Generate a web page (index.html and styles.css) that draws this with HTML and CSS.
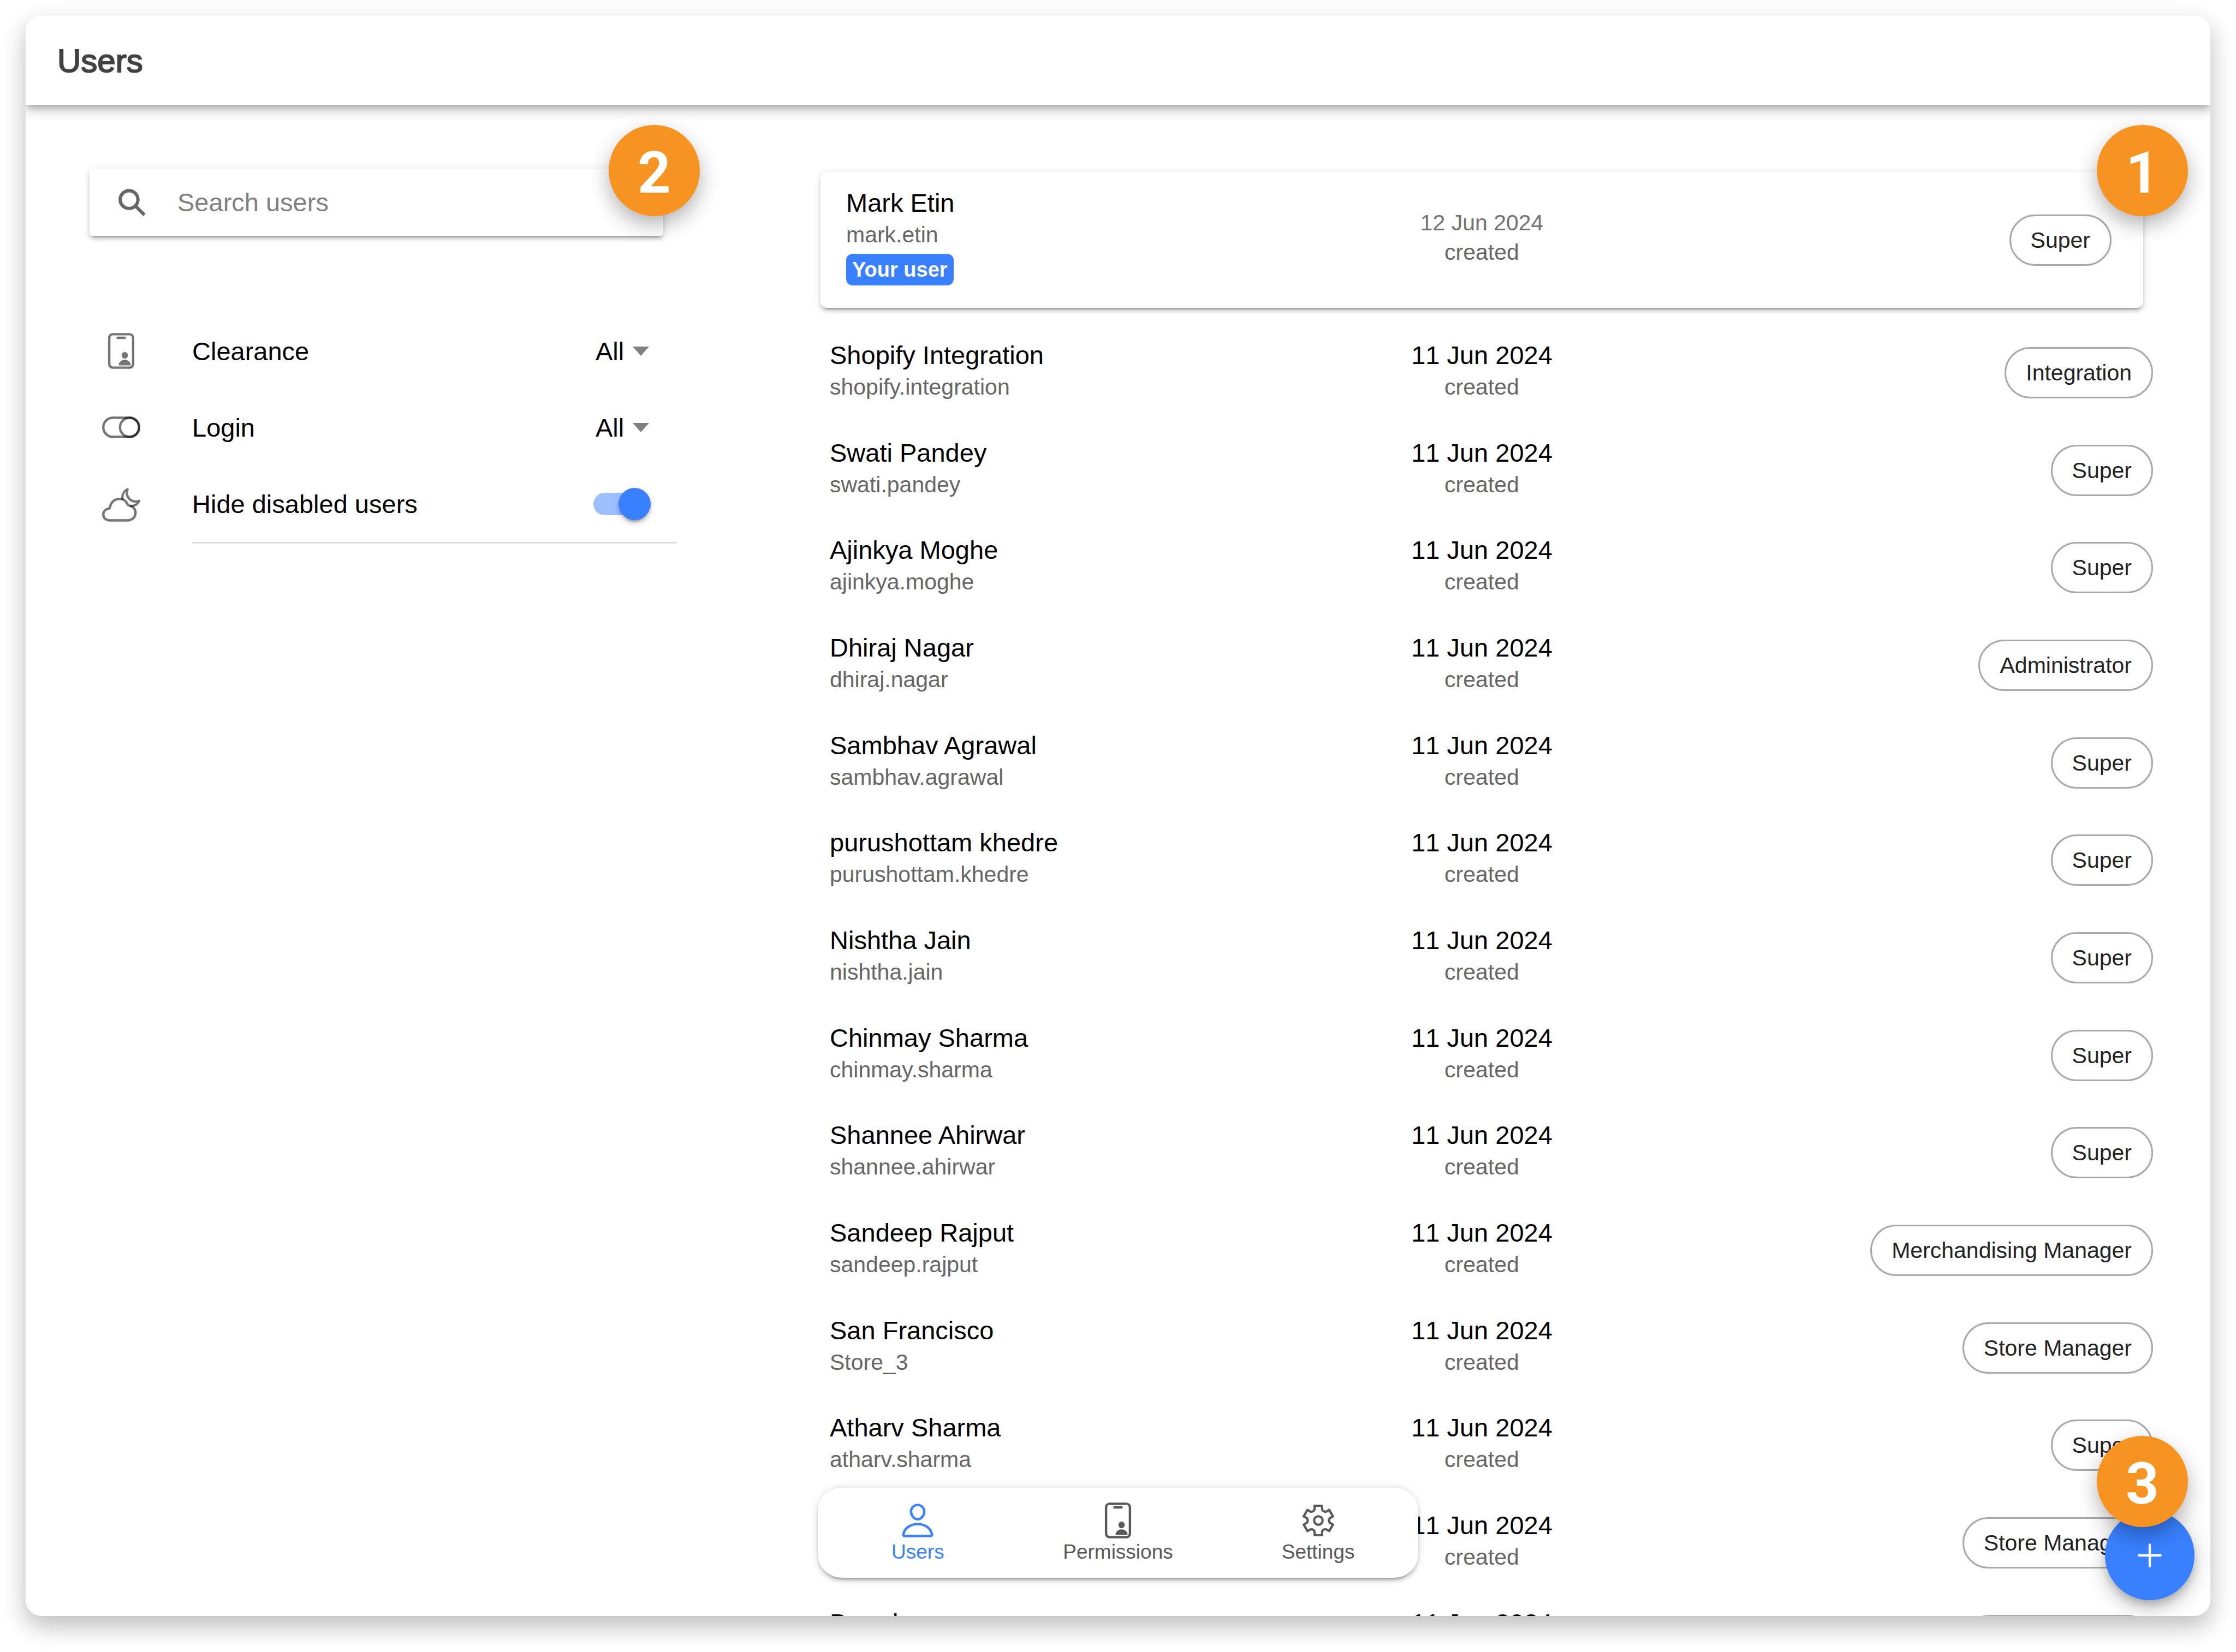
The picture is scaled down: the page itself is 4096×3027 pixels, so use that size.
FILE: index.html
```html
<!DOCTYPE html>
<html lang="en">
<head>
<meta charset="utf-8">
<title>Users</title>
<link rel="stylesheet" href="styles.css">
</head>
<body>
<svg class="sprite" aria-hidden="true">
  <symbol id="id-card" viewBox="0 0 512 512">
    <rect x="96" y="32" width="320" height="448" rx="48" fill="none" stroke="currentColor" stroke-width="32"/>
    <path d="M208 80h96" fill="none" stroke="currentColor" stroke-width="32" stroke-linecap="round"/>
    <ellipse cx="304" cy="315" rx="42" ry="45" fill="currentColor"/>
    <path d="M232 449c-6 0-10-4-9-10 4-34 40-64 81-64s77 30 81 64c1 6-3 10-9 10z" fill="currentColor"/>
  </symbol>
</svg>

<div class="window">
  <header class="toolbar"><h1>Users</h1></header>

  <main class="content">
    <aside class="filters">
      <div class="search">
        <label class="search-field">
          <svg class="search-icon" viewBox="77 100 206 206" fill="none" stroke="currentColor" stroke-width="25" aria-hidden="true">
            <circle cx="157" cy="181" r="67"/>
            <path d="M204 228l69 69"/>
          </svg>
          <input type="search" placeholder="Search users" aria-label="Search users">
        </label>
        <span class="marker marker-search">2</span>
      </div>

      <div class="filter-list">
        <div class="filter">
          <svg class="icon" aria-hidden="true"><use href="#id-card"/></svg>
          <label for="clearance">Clearance</label>
          <select id="clearance"><option>All</option></select>
          <svg class="caret" viewBox="0 0 30 17" aria-hidden="true"><path d="M0 0h30L15 17z"/></svg>
        </div>
        <div class="filter">
          <svg class="icon" viewBox="0 0 512 512" fill="none" stroke="currentColor" stroke-width="32" aria-hidden="true">
            <rect x="16" y="128" width="480" height="256" rx="128"/>
            <circle cx="368" cy="256" r="128"/>
          </svg>
          <label for="login">Login</label>
          <select id="login"><option>All</option></select>
          <svg class="caret" viewBox="0 0 30 17" aria-hidden="true"><path d="M0 0h30L15 17z"/></svg>
        </div>
        <div class="filter filter-last">
          <svg class="icon" viewBox="0 0 512 512" fill="none" stroke="currentColor" stroke-width="32" stroke-linejoin="round" stroke-linecap="round" aria-hidden="true">
            <path d="M388.31 272c47.75 0 89.77-27.77 107.69-68.92-14.21 6.18-30.9 8.61-47.38 8.61A116.31 116.31 0 01332.31 95.38c0-16.48 2.43-33.17 8.61-47.38C299.77 65.92 272 107.94 272 155.69q0 9 1.5 18"/>
            <path d="M90.61 306.85A16.07 16.07 0 00104 293.6C116.09 220.17 169.63 176 232 176c57.93 0 96.62 37.75 112.2 77.74a15.84 15.84 0 0012.2 9.87c50 8.15 91.6 41.54 91.6 99.59C448 422.6 399.4 464 340 464H106c-49.5 0-90-24.7-90-79.2 0-48.47 38.67-72.22 74.61-77.95z"/>
          </svg>
          <div class="filter-body">
            <label for="hide-disabled">Hide disabled users</label>
            <input class="toggle" id="hide-disabled" type="checkbox" checked>
          </div>
        </div>
      </div>
    </aside>

    <section class="users">
      <article class="user user-current">
        <div class="who"><h2>Mark Etin</h2><p>mark.etin</p><span class="badge">Your user</span></div>
        <div class="when"><p class="date">12 Jun 2024</p><p>created</p></div>
        <span class="chip">Super</span>
      </article>

      <ul class="user-list">
        <li class="user"><div class="who"><h2>Shopify Integration</h2><p>shopify.integration</p></div><div class="when"><h2>11 Jun 2024</h2><p>created</p></div><span class="chip">Integration</span></li>
        <li class="user"><div class="who"><h2>Swati Pandey</h2><p>swati.pandey</p></div><div class="when"><h2>11 Jun 2024</h2><p>created</p></div><span class="chip">Super</span></li>
        <li class="user"><div class="who"><h2>Ajinkya Moghe</h2><p>ajinkya.moghe</p></div><div class="when"><h2>11 Jun 2024</h2><p>created</p></div><span class="chip">Super</span></li>
        <li class="user"><div class="who"><h2>Dhiraj Nagar</h2><p>dhiraj.nagar</p></div><div class="when"><h2>11 Jun 2024</h2><p>created</p></div><span class="chip">Administrator</span></li>
        <li class="user"><div class="who"><h2>Sambhav Agrawal</h2><p>sambhav.agrawal</p></div><div class="when"><h2>11 Jun 2024</h2><p>created</p></div><span class="chip">Super</span></li>
        <li class="user"><div class="who"><h2>purushottam khedre</h2><p>purushottam.khedre</p></div><div class="when"><h2>11 Jun 2024</h2><p>created</p></div><span class="chip">Super</span></li>
        <li class="user"><div class="who"><h2>Nishtha Jain</h2><p>nishtha.jain</p></div><div class="when"><h2>11 Jun 2024</h2><p>created</p></div><span class="chip">Super</span></li>
        <li class="user"><div class="who"><h2>Chinmay Sharma</h2><p>chinmay.sharma</p></div><div class="when"><h2>11 Jun 2024</h2><p>created</p></div><span class="chip">Super</span></li>
        <li class="user"><div class="who"><h2>Shannee Ahirwar</h2><p>shannee.ahirwar</p></div><div class="when"><h2>11 Jun 2024</h2><p>created</p></div><span class="chip">Super</span></li>
        <li class="user"><div class="who"><h2>Sandeep Rajput</h2><p>sandeep.rajput</p></div><div class="when"><h2>11 Jun 2024</h2><p>created</p></div><span class="chip">Merchandising Manager</span></li>
        <li class="user"><div class="who"><h2>San Francisco</h2><p>Store_3</p></div><div class="when"><h2>11 Jun 2024</h2><p>created</p></div><span class="chip">Store Manager</span></li>
        <li class="user"><div class="who"><h2>Atharv Sharma</h2><p>atharv.sharma</p></div><div class="when"><h2>11 Jun 2024</h2><p>created</p></div><span class="chip">Super</span></li>
        <li class="user"><div class="who"></div><div class="when"><h2>11 Jun 2024</h2><p>created</p></div><span class="chip">Store Manager</span></li>
        <li class="user"><div class="who"><h2>Brand</h2></div><div class="when"><h2>11 Jun 2024</h2></div><span class="chip chip-empty"></span></li>
      </ul>
    </section>
  </main>

  <nav class="tabs">
    <a class="tab tab-active" href="#users">
      <svg class="icon" viewBox="0 0 512 512" fill="none" stroke="currentColor" stroke-width="32" stroke-linejoin="round" aria-hidden="true">
        <path d="M344 144c-3.92 52.87-44 96-88 96s-84.15-43.12-88-96c-4-55 35-96 88-96s92 42 88 96z"/>
        <path d="M256 304c-87 0-175.3 48-191.64 138.6C62.39 453.52 68.57 464 80 464h352c11.44 0 17.62-10.48 15.65-21.4C431.3 352 343 304 256 304z"/>
      </svg>
      <span>Users</span>
    </a>
    <a class="tab" href="#permissions">
      <svg class="icon" aria-hidden="true"><use href="#id-card"/></svg>
      <span>Permissions</span>
    </a>
    <a class="tab" href="#settings">
      <svg class="icon" viewBox="-144 -144 288 288" fill="none" stroke="currentColor" stroke-width="17" stroke-linejoin="round" stroke-linecap="round" aria-hidden="true">
        <path id="tooth" d="M-28-111H28V-88C29-72 46-62 62-68L82-80"/>
        <use href="#tooth" transform="rotate(60)"/>
        <use href="#tooth" transform="rotate(120)"/>
        <use href="#tooth" transform="rotate(180)"/>
        <use href="#tooth" transform="rotate(240)"/>
        <use href="#tooth" transform="rotate(300)"/>
        <circle r="32"/>
      </svg>
      <span>Settings</span>
    </a>
  </nav>

  <button class="fab" type="button" aria-label="Add user">
    <svg class="icon" viewBox="0 0 512 512" fill="none" stroke="currentColor" stroke-width="32" stroke-linecap="round" aria-hidden="true"><path d="M256 112v288M400 256H112"/></svg>
  </button>

  <span class="marker marker-list">1</span>
  <span class="marker marker-add">3</span>
</div>
</body>
</html>
```

FILE: styles.css
```css
:root {
  --primary: #3880ff;
  --muted: #666;
  --raised: 0 9px 3px -6px rgba(0, 0, 0, .2), 0 6px 6px rgba(0, 0, 0, .14), 0 3px 15px rgba(0, 0, 0, .12);
}

* { box-sizing: border-box; }

body {
  margin: 0;
  height: 100vh;
  padding: 28px 47px 66px;
  background: #fff;
  color: #000;
  font-family: "Liberation Sans", Arial, sans-serif;
  font-size: 47px;
  overflow: hidden;
}

h1, h2, p, ul { margin: 0; padding: 0; font-weight: 400; }
ul { list-style: none; }
.sprite { position: absolute; width: 0; height: 0; }

.window {
  position: relative;
  display: flex;
  flex-direction: column;
  height: 100%;
  overflow: hidden;
  border-radius: 29px;
  background: #fff;
  box-shadow: 0 18px 44px rgba(0, 0, 0, .27);
}

/* Toolbar */
.toolbar {
  position: relative;
  z-index: 1;
  flex: none;
  display: flex;
  align-items: center;
  height: 164px;
  padding: 3px 58px 0;
  background: #fff;
  box-shadow: 0 6px 12px -3px rgba(0, 0, 0, .2), 0 12px 15px rgba(0, 0, 0, .14), 0 3px 29px rgba(0, 0, 0, .12);
}
.toolbar h1 {
  color: #424242;
  font-size: 60px;
  -webkit-text-stroke: 2px #424242;
}

.content {
  flex: 1;
  min-height: 0;
  display: grid;
  grid-template-columns: 1099px minmax(0, 1fr);
  align-items: start;
  gap: 246px;
  padding: 117px 105px 0 93px;
}

/* Filters */
.filters { display: grid; gap: 141px; }
.search { position: relative; margin: 0 24px; }
.search-field {
  display: flex;
  align-items: center;
  gap: 58px;
  height: 123px;
  padding: 0 53px;
  border-radius: 6px;
  background: #fff;
  box-shadow: var(--raised);
}
.search-icon { flex: none; width: 50px; height: 50px; color: #666; }
.search-field input {
  flex: 1;
  min-width: 0;
  padding: 0;
  border: 0;
  outline: 0;
  background: none;
  font: inherit;
  appearance: none;
}
.search-field input::placeholder { color: #808080; opacity: 1; }

.icon { flex: none; width: 70px; height: 70px; }
.filter {
  display: flex;
  align-items: center;
  height: 140px;
  padding: 0 50px 0 47px;
}
.filter .icon { margin-right: 95px; color: rgba(0, 0, 0, .54); }
.filter label { flex: 1; }
.filter select {
  padding: 0;
  border: 0;
  outline: 0;
  background: none;
  color: #000;
  font: inherit;
  appearance: none;
}
.caret { width: 30px; height: 17px; margin-left: 15px; fill: #808080; }
.filter-last { height: 143px; padding-right: 0; }
.filter-body {
  flex: 1;
  display: flex;
  align-items: center;
  height: 143px;
  padding-right: 47px;
  border-bottom: 3px solid #ddd;
}

.toggle {
  display: flex;
  align-items: center;
  justify-content: flex-end;
  width: 105px;
  height: 41px;
  margin: 0;
  border-radius: 21px;
  background: #9cbfff;
  appearance: none;
}
.toggle::before {
  content: "";
  flex: none;
  width: 59px;
  height: 59px;
  border-radius: 50%;
  background: var(--primary);
  box-shadow: var(--raised);
}

/* Users */
.users { padding-top: 6px; }
.user {
  display: grid;
  grid-template-columns: 1fr auto 1fr;
  align-items: center;
}
.user h2 { font-size: 47px; line-height: 52px; }
.user p { color: var(--muted); font-size: 41px; line-height: 64px; }
.user .date { color: #737373; line-height: 44px; }
.who { min-height: 116px; padding-left: 35px; }
.when { text-align: center; font-kerning: none; }
.user-list .when { min-height: 116px; }
.chip {
  justify-self: end;
  height: 94px;
  padding: 0 36px;
  border: 3px solid #a9a9a9;
  border-radius: 47px;
  color: #222;
  font-size: 41px;
  line-height: 88px;
  white-space: nowrap;
}
.chip-empty { width: 347px; }

.user-current {
  height: 249px;
  margin: 0 18px 29px;
  border-radius: 12px;
  background: #fff;
  box-shadow: var(--raised);
}
.user-current .who { align-self: start; padding: 31px 0 0 47px; }
.user-current .chip { margin-right: 58px; }
.badge {
  display: block;
  width: max-content;
  margin-top: 3px;
  padding: 0 11px;
  border-radius: 12px;
  background: var(--primary);
  color: #fff;
  font-size: 38px;
  font-weight: 700;
  line-height: 58px;
}
.user-list { display: grid; grid-auto-rows: 179px 179px 178px; }

/* Bottom tabs */
.tabs {
  position: absolute;
  right: 0;
  bottom: 70px;
  left: 0;
  display: grid;
  grid-template-columns: repeat(3, 1fr);
  width: 1100px;
  height: 168px;
  margin: 0 auto;
  border-top: 3px solid #eee;
  border-radius: 44px;
  background: #fff;
  box-shadow: var(--raised);
}
.tab {
  display: flex;
  flex-direction: column;
  align-items: center;
  gap: 2px;
  padding-top: 25px;
  color: #595959;
  font-size: 37px;
  line-height: 42px;
  text-decoration: none;
}
.tab-active { color: var(--primary); }

.fab {
  position: absolute;
  right: 29px;
  bottom: 29px;
  display: grid;
  place-items: center;
  width: 164px;
  height: 164px;
  padding: 0;
  border: 0;
  border-radius: 50%;
  background: var(--primary);
  color: #fff;
  box-shadow: 0 9px 15px -3px rgba(0, 0, 0, .2), 0 18px 29px rgba(0, 0, 0, .14), 0 3px 53px rgba(0, 0, 0, .12);
}

/* Numbered callouts */
.marker {
  position: absolute;
  z-index: 2;
  width: 167px;
  height: 167px;
  padding-top: 10px;
  border-radius: 50%;
  background: #f79421;
  color: #fff;
  font-family: Roboto, sans-serif;
  font-size: 106px;
  font-weight: 700;
  line-height: 157px;
  text-align: center;
  box-shadow: 0 15px 37px rgba(0, 0, 0, .3);
}
.marker-search { top: -80px; right: -67px; }
.marker-list { top: 201px; right: 41px; }
.marker-add { right: 41px; bottom: 163px; }
```
